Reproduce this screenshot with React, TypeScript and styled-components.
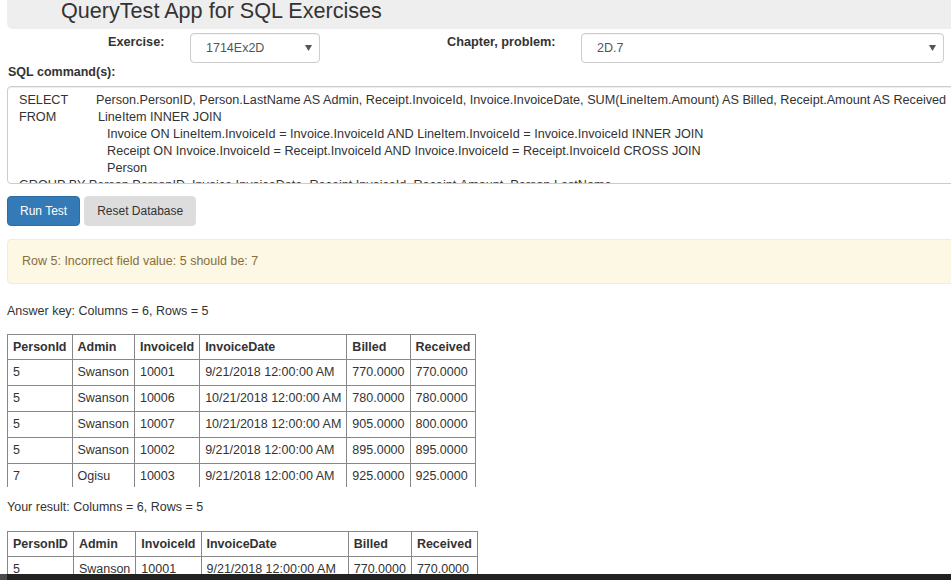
import * as React from "react";
import styled, { createGlobalStyle } from "styled-components";

const GlobalStyle = createGlobalStyle`
  html, body {
    margin: 0;
    padding: 0;
    overflow: hidden;
    background: #fff;
  }
  body {
    font-family: "Liberation Sans", Arial, sans-serif;
    font-size: 12.5px;
    line-height: 14px;
    color: #333;
  }
`;

const Page = styled.div`
  width: 1010px;
  padding-left: 7px;
`;

const Header = styled.div`
  height: 29px;
  background: #eee;
  border-radius: 0 0 0 6px;
  padding-left: 54px;
  box-sizing: border-box;
`;

const Title = styled.h1`
  margin: 0;
  font-size: 21.6px;
  line-height: 22px;
  font-weight: normal;
  color: #333;
`;

const FormRow = styled.div`
  display: flex;
  margin-top: 4px;
  height: 30px;
`;

const FieldLabel = styled.label<{ $width: number; $indent: number }>`
  width: ${(p) => p.$width}px;
  padding-left: ${(p) => p.$indent}px;
  box-sizing: border-box;
  font-weight: bold;
  font-size: 12.7px;
  padding-top: 2px;
`;

const SelectBox = styled.div<{ $width: number }>`
  width: ${(p) => p.$width}px;
  height: 30px;
  box-sizing: border-box;
  border: 1px solid #ccc;
  border-radius: 4px;
  display: flex;
  align-items: center;
  justify-content: space-between;
  padding: 0 7px 0 15px;
  color: #555;
  box-shadow: inset 0 1px 1px rgba(0, 0, 0, 0.04);
`;

const Arrow = () => (
  <svg width="7" height="6" viewBox="0 0 7 6">
    <path d="M0 0 L7 0 L3.5 6 Z" fill="#555" />
  </svg>
);

const SectionLabel = styled.div`
  font-weight: bold;
  margin-top: 2px;
  padding-left: 1px;
`;

const SqlBox = styled.div`
  margin-top: 7px;
  height: 98px;
  box-sizing: border-box;
  border: 1px solid #ccc;
  border-radius: 4px 0 0 4px;
  padding: 5px 0 0 11px;
  overflow: hidden;
  white-space: pre;
  font-size: 12.65px;
  line-height: 17px;
  box-shadow: inset 0 1px 1px rgba(0, 0, 0, 0.075);
`;

const SqlLine = styled.div<{ $indent?: number }>`
  display: flex;
  padding-left: ${(p) => p.$indent ?? 0}px;
`;

const Keyword = styled.span<{ $width?: number }>`
  display: inline-block;
  width: ${(p) => (p.$width ? `${p.$width}px` : "auto")};
`;

const ButtonRow = styled.div`
  display: flex;
  gap: 4px;
  margin-top: 12px;
`;

const Button = styled.button<{ $primary?: boolean }>`
  font-family: inherit;
  font-size: 12px;
  line-height: 16px;
  padding: 6px 12px;
  border-radius: 4px;
  border: 1px solid ${(p) => (p.$primary ? "#2e6da4" : "#ddd")};
  background: ${(p) => (p.$primary ? "#337ab7" : "#ddd")};
  color: ${(p) => (p.$primary ? "#fff" : "#333")};
  height: 30px;
  box-sizing: border-box;
`;

const Alert = styled.div`
  margin-top: 13px;
  padding: 15px 14px;
  border: 1px solid #faebcc;
  border-radius: 4px 0 0 4px;
  background: #fcf8e3;
  color: #8a6d3b;
  line-height: 13px;
`;

const Caption = styled.div<{ $top: number }>`
  margin-top: ${(p) => p.$top}px;
`;

const TableClip = styled.div<{ $top: number; $height: number }>`
  margin-top: ${(p) => p.$top}px;
  height: ${(p) => p.$height}px;
  overflow: hidden;
`;

const Table = styled.table`
  border-collapse: collapse;
  color: #333;
  font-size: 12.5px;
`;

const Th = styled.th`
  border: 1px solid #888;
  padding: 5px;
  text-align: left;
  font-weight: bold;
  line-height: 14px;
  white-space: nowrap;
`;

const Td = styled.td`
  border: 1px solid #888;
  padding: 5px 5px 6px 5px;
  line-height: 14px;
  white-space: nowrap;
`;

const ScrollBar = styled.div`
  position: fixed;
  left: 0;
  right: 0;
  bottom: 0;
  height: 6px;
  background: #222;
  display: flex;
`;

const ScrollCorner = styled.div`
  width: 7px;
  background: #4a4a4a;
`;

type Row = [string, string, string, string, string, string];

const keyRows: Row[] = [
  ["5", "Swanson", "10001", "9/21/2018 12:00:00 AM", "770.0000", "770.0000"],
  ["5", "Swanson", "10006", "10/21/2018 12:00:00 AM", "780.0000", "780.0000"],
  ["5", "Swanson", "10007", "10/21/2018 12:00:00 AM", "905.0000", "800.0000"],
  ["5", "Swanson", "10002", "9/21/2018 12:00:00 AM", "895.0000", "895.0000"],
  ["7", "Ogisu", "10003", "9/21/2018 12:00:00 AM", "925.0000", "925.0000"],
];

const resultRows: Row[] = [
  ["5", "Swanson", "10001", "9/21/2018 12:00:00 AM", "770.0000", "770.0000"],
  ["5", "Swanson", "10006", "10/21/2018 12:00:00 AM", "780.0000", "780.0000"],
  ["5", "Swanson", "10007", "10/21/2018 12:00:00 AM", "905.0000", "800.0000"],
  ["5", "Swanson", "10002", "9/21/2018 12:00:00 AM", "895.0000", "895.0000"],
  ["5", "Swanson", "10003", "9/21/2018 12:00:00 AM", "925.0000", "925.0000"],
];

const ResultTable: React.FC<{ headers: string[]; rows: Row[] }> = ({ headers, rows }) => (
  <Table>
    <thead>
      <tr>
        {headers.map((h) => (
          <Th key={h}>{h}</Th>
        ))}
      </tr>
    </thead>
    <tbody>
      {rows.map((r, i) => (
        <tr key={i}>
          {r.map((c, j) => (
            <Td key={j}>{c}</Td>
          ))}
        </tr>
      ))}
    </tbody>
  </Table>
);

export default function App() {
  return (
    <>
      <GlobalStyle />
      <Page>
        <Header>
          <Title>QueryTest App for SQL Exercises</Title>
        </Header>

        <FormRow>
          <FieldLabel $width={183} $indent={101}>Exercise:</FieldLabel>
          <SelectBox $width={130}>
            <span>1714Ex2D</span>
            <Arrow />
          </SelectBox>
          <FieldLabel $width={261} $indent={127}>Chapter, problem:</FieldLabel>
          <SelectBox $width={363}>
            <span>2D.7</span>
            <Arrow />
          </SelectBox>
        </FormRow>

        <SectionLabel>SQL command(s):</SectionLabel>
        <SqlBox>
          <SqlLine>
            <Keyword $width={77}>SELECT</Keyword>
            <span>
              Person.PersonID, Person.LastName AS Admin, Receipt.InvoiceId, Invoice.InvoiceDate, SUM(LineItem.Amount) AS Billed, Receipt.Amount AS Received
            </span>
          </SqlLine>
          <SqlLine>
            <Keyword $width={79}>FROM</Keyword>
            <span>LineItem INNER JOIN</span>
          </SqlLine>
          <SqlLine $indent={88}>
            Invoice ON LineItem.InvoiceId = Invoice.InvoiceId AND LineItem.InvoiceId = Invoice.InvoiceId INNER JOIN
          </SqlLine>
          <SqlLine $indent={88}>
            Receipt ON Invoice.InvoiceId = Receipt.InvoiceId AND Invoice.InvoiceId = Receipt.InvoiceId CROSS JOIN
          </SqlLine>
          <SqlLine $indent={88}>Person</SqlLine>
          <SqlLine>
            GROUP BY Person.PersonID, Invoice.InvoiceDate, Receipt.InvoiceId, Receipt.Amount, Person.LastName
          </SqlLine>
        </SqlBox>

        <ButtonRow>
          <Button $primary>Run Test</Button>
          <Button>Reset Database</Button>
        </ButtonRow>

        <Alert>Row 5: Incorrect field value: 5 should be: 7</Alert>

        <Caption $top={20}>Answer key: Columns = 6, Rows = 5</Caption>
        <TableClip $top={16} $height={153}>
          <ResultTable
            headers={["PersonId", "Admin", "InvoiceId", "InvoiceDate", "Billed", "Received"]}
            rows={keyRows}
          />
        </TableClip>

        <Caption $top={13}>Your result: Columns = 6, Rows = 5</Caption>
        <TableClip $top={17} $height={153}>
          <ResultTable
            headers={["PersonID", "Admin", "InvoiceId", "InvoiceDate", "Billed", "Received"]}
            rows={resultRows}
          />
        </TableClip>
      </Page>
      <ScrollBar>
        <ScrollCorner />
      </ScrollBar>
    </>
  );
}
